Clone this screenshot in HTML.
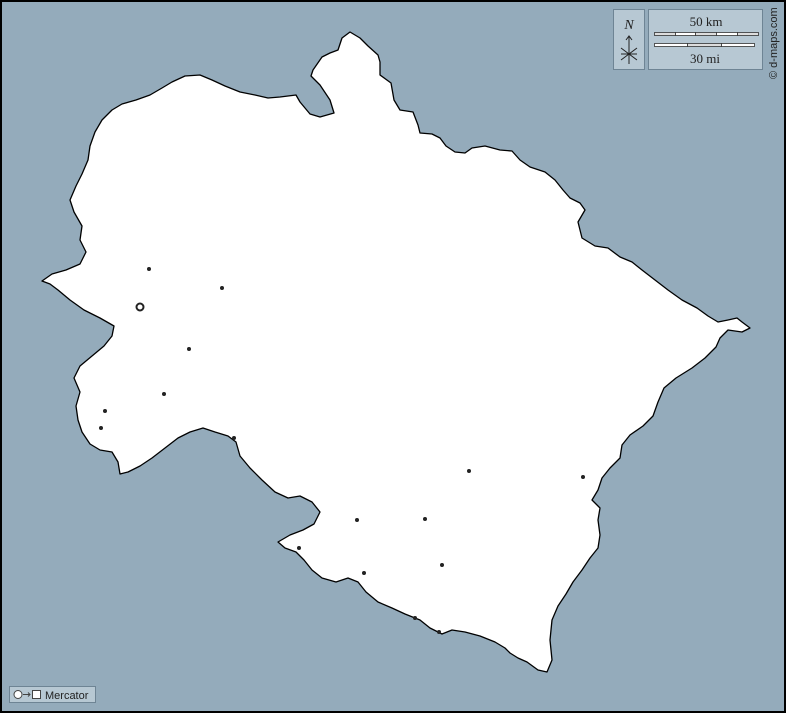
<!DOCTYPE html>
<html><head><meta charset="utf-8"><style>
html,body{margin:0;padding:0;width:786px;height:713px;overflow:hidden;background:#000}
svg{display:block}
</style></head><body>
<svg width="786" height="713" viewBox="0 0 786 713" xmlns="http://www.w3.org/2000/svg">
<rect x="0" y="0" width="786" height="713" fill="#000"/>
<rect x="2" y="2" width="782" height="709" fill="#94abbb"/>
<path fill="#fff" stroke="#000" stroke-width="1.3" stroke-linejoin="round" d="
M280,97 L296,95 L300,102 L310,114 L320,117 L334,113 L330,100 L320,85 L311,76 L313,70 L322,57 L330,53 L338,50 L342,38 L350,32 L360,38 L368,46 L378,55 L380,62 L380,75 L391,83 L394,100 L400,110 L413,112 L418,125 L420,133 L432,134 L440,138 L446,146 L455,152 L465,153 L472,148 L485,146 L500,150 L512,151 L520,160 L530,167 L545,172 L555,180 L563,190 L570,198 L580,203 L585,210 L578,222 L582,238 L595,246 L608,248 L620,257 L632,262 L642,270 L655,280 L668,290 L682,300 L697,308 L708,316 L718,322 L728,320 L737,318 L742,322 L750,328 L742,332 L728,330 L720,338 L716,347 L705,358 L692,368 L676,378 L664,388 L658,402 L653,416 L643,426 L630,435 L622,445 L620,458 L610,468 L602,478 L598,490 L592,500 L600,508 L598,520 L600,535 L598,548 L590,558 L582,570 L573,582 L566,594 L558,606 L552,620 L550,640 L552,660 L547,672 L538,670 L527,662 L518,658 L510,653 L505,648 L495,642 L480,636 L465,632 L452,630 L442,634 L430,628 L420,620 L405,614 L392,608 L378,602 L366,592 L358,582 L348,578 L336,582 L322,578 L312,570 L304,560 L296,552 L285,548 L278,542 L290,535 L303,530 L314,524 L320,512 L312,502 L300,496 L288,498 L275,492 L262,480 L250,468 L240,456 L236,442 L228,436 L215,432 L203,428 L190,432 L178,438 L165,448 L152,458 L140,466 L128,472 L120,474 L118,462 L112,452 L100,450 L90,444 L82,432 L78,420 L76,406 L80,392 L74,378 L80,366 L92,356 L104,346 L112,336 L114,326 L100,318 L84,310 L70,300 L58,290 L50,284 L42,281 L52,274 L66,270 L80,264 L86,252 L80,240 L82,226 L74,212 L70,200 L76,186 L82,174 L88,160 L90,146 L95,132 L102,120 L112,110 L122,104 L136,100 L150,95 L162,88 L172,82 L185,76 L200,75 L212,80 L225,86 L240,92 L255,95 L268,98 Z"/>
<g fill="#222">
<circle cx="149" cy="269" r="2"/><circle cx="222" cy="288" r="2"/><circle cx="189" cy="349" r="2"/>
<circle cx="164" cy="394" r="2"/><circle cx="105" cy="411" r="2"/><circle cx="101" cy="428" r="2"/>
<circle cx="234" cy="438" r="2"/><circle cx="469" cy="471" r="2"/><circle cx="583" cy="477" r="2"/>
<circle cx="357" cy="520" r="2"/><circle cx="425" cy="519" r="2"/><circle cx="299" cy="548" r="2"/>
<circle cx="442" cy="565" r="2"/><circle cx="364" cy="573" r="2"/><circle cx="415" cy="618" r="2"/>
<circle cx="439" cy="632" r="2"/>
</g>
<circle cx="140" cy="307" r="3.5" fill="none" stroke="#222" stroke-width="2"/>
<!-- north box -->
<rect x="613.5" y="9.5" width="31" height="60" fill="#b7c8d3" stroke="#6e8494"/>
<text x="629" y="29" font-family="Liberation Serif, serif" font-style="italic" font-size="14" text-anchor="middle" fill="#222">N</text>
<g stroke="#222" stroke-width="1" fill="none">
<path d="M629,36 L629,64 M626,40 L629,36 L632,40 M621,48 L637,60 M637,48 L621,60 M621,54 L637,54"/>
</g>
<!-- scale box -->
<rect x="648.5" y="9.5" width="114" height="60" fill="#b7c8d3" stroke="#6e8494"/>
<text x="706" y="26" font-family="Liberation Serif, serif" font-size="13" text-anchor="middle" fill="#222">50 km</text>
<text x="705" y="63" font-family="Liberation Serif, serif" font-size="13" text-anchor="middle" fill="#222">30 mi</text>
<g stroke="#333" stroke-width="0.8">
<rect x="654.5" y="32.5" width="21" height="3" fill="#ddd"/><rect x="675.5" y="32.5" width="20" height="3" fill="#fff"/>
<rect x="695.5" y="32.5" width="21" height="3" fill="#ddd"/><rect x="716.5" y="32.5" width="21" height="3" fill="#fff"/>
<rect x="737.5" y="32.5" width="21" height="3" fill="#ddd"/>
<rect x="654.5" y="43.5" width="33" height="3" fill="#fff"/><rect x="687.5" y="43.5" width="34" height="3" fill="#ddd"/>
<rect x="721.5" y="43.5" width="33" height="3" fill="#fff"/>
</g>
<text transform="translate(777,79) rotate(-90)" font-family="Liberation Sans, sans-serif" font-size="11" fill="#222">© d-maps.com</text>
<!-- mercator -->
<rect x="9.5" y="686.5" width="86" height="16" fill="#b7c8d3" stroke="#6e8494"/>
<circle cx="18" cy="694.5" r="4" fill="#fff" stroke="#444"/>
<path d="M23,694.5 L30,694.5 M28,692.5 L30,694.5 L28,696.5" stroke="#444" fill="none"/>
<rect x="32.5" y="690.5" width="8" height="8" fill="#fff" stroke="#444"/>
<text x="45" y="699" font-family="Liberation Sans, sans-serif" font-size="11" fill="#222">Mercator</text>
</svg>
</body></html>
